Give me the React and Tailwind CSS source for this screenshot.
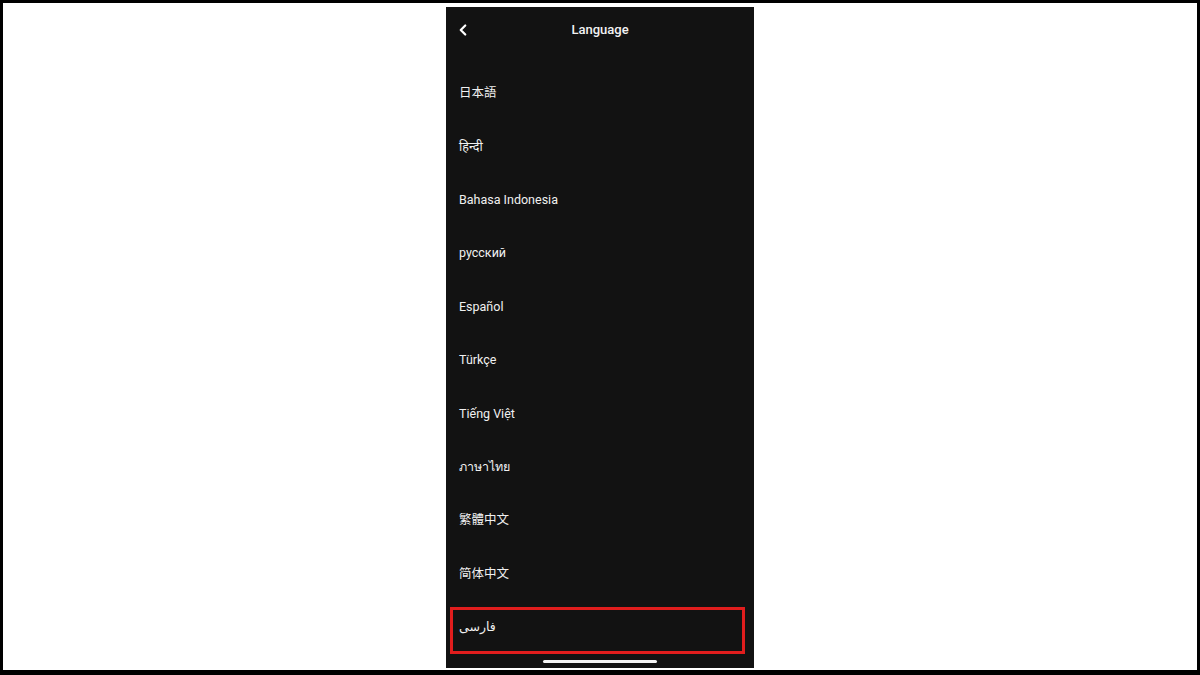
import { ChevronLeft } from 'lucide-react';

const languages = [
  '日本語',
  'हिन्दी',
  'Bahasa Indonesia',
  'русский',
  'Español',
  'Türkçe',
  'Tiếng Việt',
  'ภาษาไทย',
  '繁體中文',
  '简体中文',
  'فارسی',
];

const font = {
  fontFamily:
    'Roboto, "Noto Sans", "Noto Sans CJK SC", "Noto Sans CJK JP", "DejaVu Sans", sans-serif',
};

export default function App() {
  return (
    <div
      className="flex h-[675px] w-[1200px] justify-center border-x-[3px] border-t-[3px] border-b-[5px] border-black bg-white pt-[4px]"
      style={font}
    >
      <div className="flex h-[661px] w-[308px] flex-col bg-[#121212]">
        <div className="grid h-[46px] grid-cols-[40px_1fr_40px] items-center">
          <button className="flex items-center pl-[8px] text-white">
            <ChevronLeft size={18} strokeWidth={3} />
          </button>
          <h1 className="text-center text-[13px] font-medium text-[#f2f2f2]">Language</h1>
          <div />
        </div>

        <ul className="pt-[14px]">
          {languages.map((lang, i) => (
            <li key={lang} className="relative flex h-[53.4px] items-center pl-[13px]">
              <span className="text-[12.5px] font-normal text-[#f0f0f0]">{lang}</span>
              {i === languages.length - 1 && (
                <div className="absolute top-[6px] right-[9px] bottom-0 left-[4px] border-[3px] border-[#e11d1d]" />
              )}
            </li>
          ))}
        </ul>

        <div className="mt-[6px] flex justify-center">
          <div className="h-[3px] w-[114px] rounded-full bg-[#f4f4f4]" />
        </div>
      </div>
    </div>
  );
}
